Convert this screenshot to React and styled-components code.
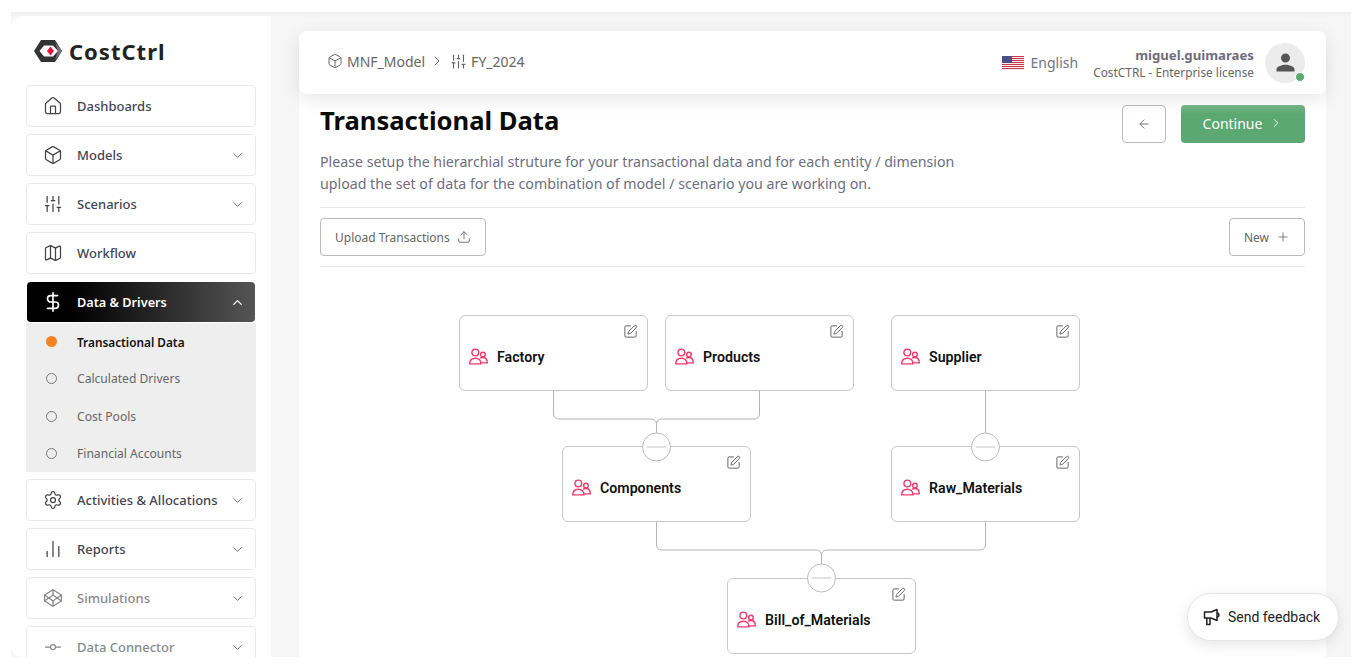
import React from "react"
import styled, { createGlobalStyle } from "styled-components"
import {
  ArrowLeft,
  Box,
  ChartNoAxesColumn,
  ChevronDown,
  ChevronRight,
  ChevronUp,
  Codepen,
  DollarSign,
  GitCommitHorizontal,
  House,
  Map as MapIcon,
  Plus,
  Settings,
  SlidersVertical,
  SquarePen,
  Upload,
} from "lucide-react"
import { MdPerson } from "react-icons/md"

const GlobalStyle = createGlobalStyle`
  html, body {
    margin: 0;
    padding: 0;
    background: #fff;
  }
  body {
    font-family: "Noto Sans", "Open Sans", sans-serif;
    overflow: hidden;
  }
  * {
    box-sizing: border-box;
  }
`

const Frame = styled.div`
  display: flex;
  height: 645px;
  margin: 12px 18px 0 11px;
  background: linear-gradient(#f1f1f1, #f6f6f6 6px);
  overflow: hidden;
  position: relative;
`

const Sidebar = styled.aside`
  flex: 0 0 260px;
  margin-top: 4px;
  padding: 0 15px;
  background: #fff;
  border-radius: 12px 0 0 12px;
  overflow: hidden;
`

const LogoRow = styled.div`
  display: flex;
  align-items: center;
  gap: 6px;
  height: 69px;
  padding: 1px 0 0 7px;
`

const LogoText = styled.span`
  font-size: 22px;
  font-weight: 700;
  letter-spacing: 1px;
  color: #222;
`

const NavList = styled.nav`
  display: flex;
  flex-direction: column;
  gap: 7px;
`

const NavItem = styled.div`
  display: flex;
  align-items: center;
  height: 42px;
  padding: 0 10px 0 16px;
  border: 1px solid ${(p) => (p.$active ? "#fff" : "#eaeaea")};
  border-radius: 4px;
  font-size: 13px;
  color: ${(p) => (p.$active ? "#fff" : p.$muted ? "#8a8a8a" : "#454552")};
  background: ${(p) =>
    p.$active ? "linear-gradient(90deg, #000 20%, #555 100%)" : "#fff"};
  background-clip: padding-box;
`

const NavIconSlot = styled.span`
  flex: 0 0 20px;
  width: 20px;
  min-width: 0;
  display: flex;
  justify-content: center;
  margin-right: 14px;
  color: ${(p) => (p.$active ? "#fff" : p.$muted ? "#888" : "#444")};
  svg {
    flex: none;
  }
`

const NavLabel = styled.span`
  flex: 1;
  font-size: ${(p) => (p.$active ? "12.7px" : "13px")};
  font-weight: ${(p) => (p.$active ? 600 : 500)};
`

const NavChevron = styled.span`
  display: flex;
  color: ${(p) => (p.$active ? "#fff" : "#666")};
`

const SubPanel = styled.div`
  margin-top: -7px;
  background: #eee;
`

const SubItem = styled.div`
  display: flex;
  align-items: center;
  height: 37.25px;
  padding-left: 20px;
  font-size: ${(p) => (p.$active ? "11.8px" : "12.1px")};
  font-weight: ${(p) => (p.$active ? 600 : 400)};
  color: ${(p) => (p.$active ? "#111" : "#666")};
`

const SubDot = styled.span`
  flex: 0 0 11px;
  width: 11px;
  height: 11px;
  margin-right: 20px;
  border-radius: 50%;
  background: ${(p) => (p.$active ? "#f58220" : "transparent")};
  border: ${(p) => (p.$active ? "none" : "1px solid #777")};
`

const Main = styled.main`
  flex: 0 0 1027px;
  margin: 19px 0 0 28px;
  background: #fff;
  border-radius: 8px 8px 0 0;
  display: flex;
  flex-direction: column;
`

const Header = styled.header`
  flex: 0 0 63px;
  display: flex;
  align-items: center;
  padding: 0 21px 0 28px;
  background: #fff;
  border-radius: 8px;
  box-shadow: 0 5px 18px rgba(0, 0, 0, 0.1);
  position: relative;
  z-index: 2;
`

const Crumbs = styled.div`
  flex: 1;
  display: flex;
  align-items: center;
  margin-top: -3px;
  font-size: 14px;
  color: #666;
`

const Crumb = styled.span`
  display: flex;
  align-items: center;
  gap: 4px;
`

const CrumbSeparator = styled.span`
  display: flex;
  margin: 0 5px 0 4px;
`

const Language = styled.div`
  display: flex;
  align-items: center;
  gap: 7px;
  margin-right: 15px;
  font-size: 14px;
  color: #747484;
`

const User = styled.div`
  display: flex;
  flex-direction: column;
  align-items: flex-end;
  margin: 1px 11px 0 0;
`

const UserName = styled.span`
  font-size: 13.2px;
  font-weight: 700;
  line-height: 17px;
  color: #6e6e7e;
`

const UserPlan = styled.span`
  font-size: 11.85px;
  line-height: 16px;
  color: #666;
`

const Avatar = styled.div`
  position: relative;
  display: flex;
  align-items: center;
  justify-content: center;
  width: 40px;
  height: 40px;
  border-radius: 50%;
  background: #ececec;
  color: #555;
`

const StatusDot = styled.span`
  position: absolute;
  right: 0;
  bottom: 1px;
  width: 10px;
  height: 10px;
  border-radius: 50%;
  background: #5aa872;
  border: 1px solid #fff;
`

const Content = styled.div`
  flex: 1;
  display: flex;
  flex-direction: column;
  padding: 11px 21px 0;
  min-height: 0;
`

const TitleRow = styled.div`
  display: flex;
  justify-content: space-between;
  align-items: flex-start;
  padding-bottom: 12px;
  border-bottom: 1px solid #e8e8e8;
`

const Title = styled.h1`
  margin: 1px 0 0;
  font-size: 25.6px;
  font-weight: 700;
  line-height: 30px;
  color: #0b0b0b;
`

const Description = styled.p`
  margin: 15px 0 0;
  width: 670px;
  font-size: 14.2px;
  line-height: 22px;
  color: #6e6e7e;
`

const Actions = styled.div`
  display: flex;
  gap: 15px;
`

const Button = styled.button`
  display: flex;
  align-items: center;
  justify-content: center;
  gap: 7px;
  height: 38px;
  padding: 0 14px;
  font-family: inherit;
  font-size: 12px;
  color: #666;
  background: #fff;
  border: 1px solid #bbb;
  border-radius: 4px;
`

const BackButton = styled(Button)`
  width: 44px;
  padding: 0;
`

const ContinueButton = styled(Button)`
  width: 124px;
  padding: 0 0 2px;
  font-size: 14px;
  font-weight: 400;
  color: #fff;
  border: none;
  background: linear-gradient(#7ab78d, #5ba872 25%);
`

const Toolbar = styled.div`
  display: flex;
  justify-content: space-between;
  align-items: center;
  height: 59px;
  border-bottom: 1px solid #e8e8e8;
`

const Canvas = styled.div`
  position: relative;
  flex: 1;
`

const Node = styled.div`
  position: absolute;
  left: ${(p) => p.$x}px;
  top: ${(p) => p.$y}px;
  display: flex;
  align-items: center;
  gap: 9px;
  width: 189px;
  height: 76px;
  padding: 7px 0 0 9px;
  background: #fff;
  border: 1px solid #c8c8c8;
  border-radius: 6px;
`

const NodeLabel = styled.span`
  font-family: Roboto, sans-serif;
  font-size: 14.2px;
  font-weight: 600;
  color: #111;
`

const EditIcon = styled(SquarePen)`
  position: absolute;
  top: 8px;
  right: 9px;
  color: #666;
`

const Wires = styled.svg`
  position: absolute;
  left: 0;
  top: 0;
  overflow: visible;
  pointer-events: none;
`

const Feedback = styled.button`
  position: absolute;
  left: 1176px;
  top: 581px;
  display: flex;
  align-items: center;
  gap: 7px;
  width: 152px;
  height: 48px;
  padding: 0 0 0 15px;
  font-family: Roboto, sans-serif;
  font-size: 14px;
  color: #222;
  background: #fff;
  border: 1px solid #e6e6e6;
  border-radius: 24px;
  box-shadow: 0 4px 14px rgba(0, 0, 0, 0.1);
  z-index: 3;
`

const navTop = [
  { label: "Dashboards", icon: House },
  { label: "Models", icon: Box, more: true },
  { label: "Scenarios", icon: SlidersVertical, more: true },
  { label: "Workflow", icon: MapIcon },
]

const navBottom = [
  { label: "Activities & Allocations", icon: Settings, more: true },
  { label: "Reports", icon: ChartNoAxesColumn, more: true },
  { label: "Simulations", icon: Codepen, more: true, muted: true },
  { label: "Data Connector", icon: GitCommitHorizontal, more: true, muted: true },
]

const subItems = [
  { label: "Transactional Data", active: true },
  { label: "Calculated Drivers" },
  { label: "Cost Pools" },
  { label: "Financial Accounts" },
]

const nodes = [
  { label: "Factory", x: 139, y: 48 },
  { label: "Products", x: 345, y: 48 },
  { label: "Supplier", x: 571, y: 48 },
  { label: "Components", x: 242, y: 179 },
  { label: "Raw_Materials", x: 571, y: 179 },
  { label: "Bill_of_Materials", x: 407, y: 311 },
]

const wires = [
  "M233.5 124 V147 a5 5 0 0 0 5 5 H331.5 a5 5 0 0 1 5 5 V166",
  "M439.5 124 V147 a5 5 0 0 1 -5 5 H341.5 a5 5 0 0 0 -5 5",
  "M665.5 124 V166",
  "M336.5 255 V278 a5 5 0 0 0 5 5 H496.5 a5 5 0 0 1 5 5 V297",
  "M665.5 255 V278 a5 5 0 0 1 -5 5 H506.5 a5 5 0 0 0 -5 5",
]

const joins = [
  { x: 336.5, y: 180 },
  { x: 665.5, y: 180 },
  { x: 501.5, y: 311 },
]

function Logo() {
  return (
    <svg width="30" height="24" viewBox="0 0 30 24">
      <path d="M8 1 H22 L29 12 L22 23 H8 L1 12 Z" fill="#333" />
      <path d="M11 6.5 H20 L25 12 L20 17.5 H11 L6.5 12 Z" fill="#fff" />
      <path d="M22 3 L29 12 L22 21 L25 12 Z" fill="#777" />
      <path d="M17.5 7.5 L21 12 L17.5 16.5 L14 12 Z" fill="#e5173f" />
    </svg>
  )
}

function UsaFlag() {
  const stripes = [0, 2, 4, 6, 8, 10, 12]
  return (
    <svg width="22" height="14" viewBox="0 0 22 14">
      <rect width="22" height="14" fill="#fff" />
      {stripes.map((y) => (
        <rect key={y} y={y} width="22" height="1.1" fill="#c9354a" />
      ))}
      <rect width="10" height="7" fill="#4a4f86" />
    </svg>
  )
}

function PeopleIcon() {
  return (
    <svg
      width="19"
      height="17"
      viewBox="0 0 18 16"
      fill="none"
      stroke="#f0386b"
      strokeWidth="1.3"
    >
      <circle cx="6" cy="4.2" r="3.2" />
      <circle cx="13.2" cy="6.2" r="2.2" />
      <path d="M0.7 15 C0.7 11.2 3 9.6 6 9.6 C9 9.6 11.3 11.2 11.3 15 Z" />
      <path d="M10.5 9.6 C11.2 9.2 12.2 9 13.2 9 C15.6 9 17.3 10.8 17.3 14 H11.3" />
    </svg>
  )
}

function FeedbackIcon() {
  return (
    <svg
      width="18"
      height="18"
      viewBox="0 0 18 18"
      fill="none"
      stroke="#222"
      strokeWidth="1.5"
      strokeLinejoin="round"
    >
      <path d="M1.5 4 H8 L14 1.5 V12.5 L8 10 H1.5 Z" />
      <path d="M3.8 10 V16.5 H7 V10" />
      <path d="M14 5 C16.5 5 16.5 9 14 9" />
    </svg>
  )
}

function NavEntry({ item }) {
  const Icon = item.icon
  return (
    <NavItem $muted={item.muted}>
      <NavIconSlot $muted={item.muted}>
        <Icon size={20} strokeWidth={1.5} />
      </NavIconSlot>
      <NavLabel>{item.label}</NavLabel>
      {item.more && (
        <NavChevron>
          <ChevronDown size={15} strokeWidth={1.5} />
        </NavChevron>
      )}
    </NavItem>
  )
}

export default function App() {
  return (
    <>
      <GlobalStyle />
      <Frame>
        <Sidebar>
          <LogoRow>
            <Logo />
            <LogoText>CostCtrl</LogoText>
          </LogoRow>
          <NavList>
            {navTop.map((item) => (
              <NavEntry key={item.label} item={item} />
            ))}
            <NavItem $active>
              <NavIconSlot $active>
                <DollarSign size={22} strokeWidth={1.8} />
              </NavIconSlot>
              <NavLabel $active>Data &amp; Drivers</NavLabel>
              <NavChevron $active>
                <ChevronUp size={15} strokeWidth={2} />
              </NavChevron>
            </NavItem>
            <SubPanel>
              {subItems.map((sub) => (
                <SubItem key={sub.label} $active={sub.active}>
                  <SubDot $active={sub.active} />
                  {sub.label}
                </SubItem>
              ))}
            </SubPanel>
            {navBottom.map((item) => (
              <NavEntry key={item.label} item={item} />
            ))}
          </NavList>
        </Sidebar>
        <Main>
          <Header>
            <Crumbs>
              <Crumb>
                <Box size={16} strokeWidth={1.5} />
                MNF_Model
              </Crumb>
              <CrumbSeparator>
                <ChevronRight size={16} strokeWidth={1.5} />
              </CrumbSeparator>
              <Crumb>
                <SlidersVertical size={17} strokeWidth={1.6} />
                FY_2024
              </Crumb>
            </Crumbs>
            <Language>
              <UsaFlag />
              English
            </Language>
            <User>
              <UserName>miguel.guimaraes</UserName>
              <UserPlan>CostCTRL - Enterprise license</UserPlan>
            </User>
            <Avatar>
              <MdPerson size={27} />
              <StatusDot />
            </Avatar>
          </Header>
          <Content>
            <TitleRow>
              <div>
                <Title>Transactional Data</Title>
                <Description>
                  Please setup the hierarchial struture for your transactional
                  data and for each entity / dimension upload the set of data
                  for the combination of model / scenario you are working on.
                </Description>
              </div>
              <Actions>
                <BackButton>
                  <ArrowLeft size={14} strokeWidth={1.5} />
                </BackButton>
                <ContinueButton>
                  Continue
                  <ChevronRight size={14} strokeWidth={1.5} />
                </ContinueButton>
              </Actions>
            </TitleRow>
            <Toolbar>
              <Button>
                Upload Transactions
                <Upload size={14} strokeWidth={1.5} />
              </Button>
              <Button>
                New
                <Plus size={14} strokeWidth={1.4} />
              </Button>
            </Toolbar>
            <Canvas>
              {nodes.map((node) => (
                <Node key={node.label} $x={node.x} $y={node.y}>
                  <PeopleIcon />
                  <NodeLabel>{node.label}</NodeLabel>
                  <EditIcon size={15} strokeWidth={1.6} />
                </Node>
              ))}
              <Wires width="800" height="340">
                {wires.map((d) => (
                  <path key={d} d={d} fill="none" stroke="#b4b4b4" strokeWidth="1" />
                ))}
                {joins.map((j) => (
                  <g key={j.x}>
                    <circle cx={j.x} cy={j.y} r="14" fill="#fff" stroke="#bbb" />
                    <path d={`M${j.x - 10} ${j.y} H${j.x + 10}`} stroke="#c4c4c4" />
                  </g>
                ))}
              </Wires>
            </Canvas>
          </Content>
        </Main>
        <Feedback>
          <FeedbackIcon />
          Send feedback
        </Feedback>
      </Frame>
    </>
  )
}
